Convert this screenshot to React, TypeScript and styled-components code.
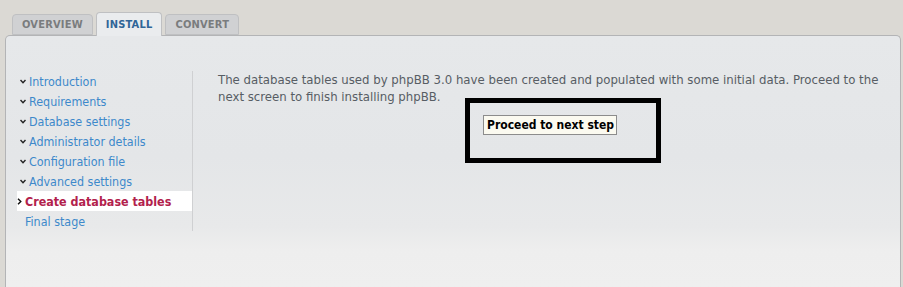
import React from "react";
import styled, { createGlobalStyle } from "styled-components";

const GlobalStyle = createGlobalStyle`
  html, body { margin: 0; padding: 0; }
  body {
    background: #dbd9d4;
    font-family: "DejaVu Sans Condensed", "DejaVu Sans", Verdana, sans-serif;
    overflow: hidden;
  }
`;

const Page = styled.div`
  padding: 12px 2px 0 5px;
  height: 275px;
  display: flex;
  flex-direction: column;
`;

const Tabs = styled.div`
  display: flex;
  align-items: flex-end;
  gap: 3px;
  padding-left: 7px;
  position: relative;
  z-index: 1;
  margin-bottom: -1px;
`;

const Tab = styled.div<{ $active?: boolean }>`
  height: ${(p) => (p.$active ? 24 : 21)}px;
  padding: 0 9px;
  display: flex;
  align-items: center;
  justify-content: center;
  box-sizing: border-box;
  border: 1px solid #bfc0c2;
  border-bottom: ${(p) => (p.$active ? "none" : "1px solid #bfc0c2")};
  border-radius: 4px 4px 0 0;
  background: ${(p) => (p.$active ? "#eaecee" : "#d0d1d3")};
  color: ${(p) => (p.$active ? "#2f6597" : "#7a7c7e")};
  font-weight: bold;
  font-size: 11px;
  letter-spacing: 0.2px;
  margin-bottom: ${(p) => (p.$active ? 0 : 1)}px;
`;

const Panel = styled.div`
  flex: 1;
  border: 1px solid #b3b4b6;
  border-bottom: none;
  border-radius: 5px 5px 0 0;
  background: linear-gradient(
    to bottom,
    #e6e8ea 0px,
    #e4e6e8 120px,
    #e8e9ea 190px,
    #eeeeee 215px,
    #efefef 100%
  );
  display: flex;
  align-items: flex-start;
  padding: 35px 18px 0 11px;
`;

const Menu = styled.ul`
  list-style: none;
  margin: 0;
  padding: 0;
  width: 175px;
  border-right: 1px solid #cfd0d2;
  flex-shrink: 0;
`;

const MenuItem = styled.li<{ $active?: boolean }>`
  height: 20px;
  display: flex;
  align-items: center;
  gap: 3px;
  padding-left: ${(p) => (p.$active ? 0 : 2)}px;
  background: ${(p) => (p.$active ? "#ffffff" : "transparent")};
  font-size: 12.4px;
  font-weight: ${(p) => (p.$active ? "bold" : "normal")};
  color: ${(p) => (p.$active ? "#b2214c" : "#3d89cb")};
`;

const Bullet = styled.span<{ $w?: number }>`
  width: ${(p) => p.$w ?? 7}px;
  display: inline-flex;
  align-items: center;
  justify-content: center;
`;

const Spacer = styled.span`
  width: 3px;
`;

const Main = styled.div`
  flex: 1;
  padding-left: 25px;
  padding-top: 0;
`;

const Text = styled.p`
  margin: 0;
  font-size: 13.05px;
  line-height: 17px;
  color: #575d64;
`;

const ButtonRow = styled.div`
  display: flex;
  justify-content: center;
  margin-top: 9px;
`;

const ButtonWrap = styled.div`
  position: relative;
  display: inline-block;
`;

const Button = styled.button`
  font-family: "DejaVu Sans Condensed", "DejaVu Sans", Verdana, sans-serif;
  font-size: 12px;
  font-weight: bold;
  color: #000;
  background: #fbfaf0;
  border: 1px solid #8c8c8c;
  padding: 0 3px;
  height: 20px;
  width: 134px;
  margin: 0;
  white-space: nowrap;
`;

const Highlight = styled.div`
  position: absolute;
  left: -18px;
  top: -16px;
  width: 196px;
  height: 65px;
  box-sizing: border-box;
  border: 5px solid #000;
  pointer-events: none;
`;

const Down = () => (
  <svg width="6" height="5" viewBox="0 0 6 5">
    <polyline points="0.5,1 3,3.8 5.5,1" fill="none" stroke="#222" strokeWidth="1.4" />
  </svg>
);

const Right = () => (
  <svg width="5" height="7" viewBox="0 0 5 7">
    <polyline points="1,0.7 3.8,3.5 1,6.3" fill="none" stroke="#111" strokeWidth="1.4" />
  </svg>
);

const items = [
  "Introduction",
  "Requirements",
  "Database settings",
  "Administrator details",
  "Configuration file",
  "Advanced settings",
];

export default function App() {
  return (
    <>
      <GlobalStyle />
      <Page>
        <Tabs>
          <Tab>OVERVIEW</Tab>
          <Tab $active>INSTALL</Tab>
          <Tab>CONVERT</Tab>
        </Tabs>
        <Panel>
          <Menu>
            {items.map((t) => (
              <MenuItem key={t}>
                <Bullet>
                  <Down />
                </Bullet>
                {t}
              </MenuItem>
            ))}
            <MenuItem $active>
              <Bullet $w={5}>
                <Right />
              </Bullet>
              Create database tables
            </MenuItem>
            <MenuItem>
              <Spacer />
              Final stage
            </MenuItem>
          </Menu>
          <Main>
            <Text>
              The database tables used by phpBB 3.0 have been created and populated with some
              initial data. Proceed to the next screen to finish installing phpBB.
            </Text>
            <ButtonRow>
              <ButtonWrap>
                <Button>Proceed to next step</Button>
                <Highlight />
              </ButtonWrap>
            </ButtonRow>
          </Main>
        </Panel>
      </Page>
    </>
  );
}
